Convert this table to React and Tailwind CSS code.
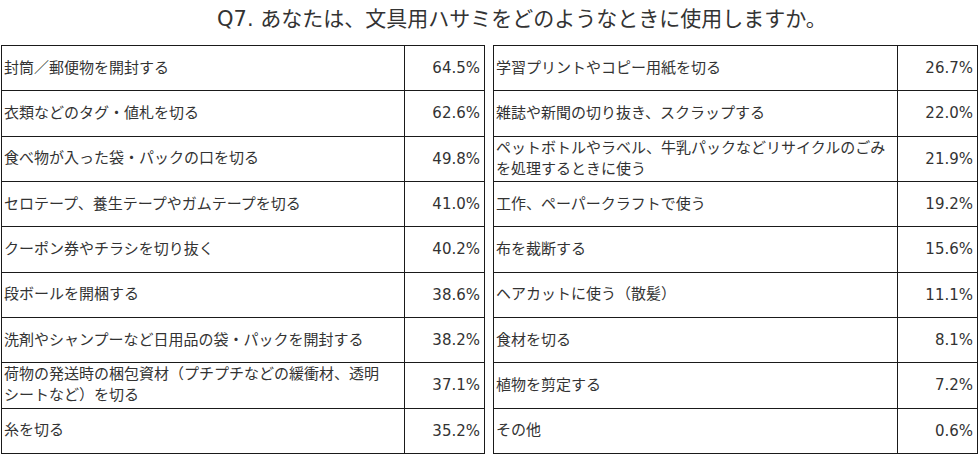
const leftRows = [
  ["封筒／郵便物を開封する", "64.5%"],
  ["衣類などのタグ・値札を切る", "62.6%"],
  ["食べ物が入った袋・パックの口を切る", "49.8%"],
  ["セロテープ、養生テープやガムテープを切る", "41.0%"],
  ["クーポン券やチラシを切り抜く", "40.2%"],
  ["段ボールを開梱する", "38.6%"],
  ["洗剤やシャンプーなど日用品の袋・パックを開封する", "38.2%"],
  ["荷物の発送時の梱包資材（プチプチなどの緩衝材、透明\nシートなど）を切る", "37.1%"],
  ["糸を切る", "35.2%"],
]

const rightRows = [
  ["学習プリントやコピー用紙を切る", "26.7%"],
  ["雑誌や新聞の切り抜き、スクラップする", "22.0%"],
  ["ペットボトルやラベル、牛乳パックなどリサイクルのごみ\nを処理するときに使う", "21.9%"],
  ["工作、ペーパークラフトで使う", "19.2%"],
  ["布を裁断する", "15.6%"],
  ["ヘアカットに使う（散髪）", "11.1%"],
  ["食材を切る", "8.1%"],
  ["植物を剪定する", "7.2%"],
  ["その他", "0.6%"],
]

function Table({ rows, width }) {
  return (
    <div className={`flex flex-col border-t border-l border-r border-[#1a1a1a] ${width}`}>
      {rows.map(([label, value], i) => (
        <div key={i} className="flex h-[45.33px] border-b border-[#1a1a1a]">
          <div className="flex-1 flex items-center pl-[2px] leading-[21px] whitespace-pre-line">
            {label}
          </div>
          <div className="w-[80px] flex items-center justify-end pr-[4px] border-l border-[#1a1a1a]">
            {value}
          </div>
        </div>
      ))}
    </div>
  )
}

export default function App() {
  return (
    <div className="w-[978px] h-[455px] bg-white text-[#333] text-[15px] font-['DejaVu_Sans','Noto_Sans_CJK_JP',sans-serif]">

      {/* Title */}
      <div className="h-[45px] pl-[217px] pt-[5px] text-[21px] leading-[29px] text-[#333]">
        Q7. あなたは、文具用ハサミをどのようなときに使用しますか。
      </div>

      {/* Tables */}
      <div className="flex gap-[8px] pl-[1px]">
        <Table rows={leftRows} width="w-[484px]" />
        <Table rows={rightRows} width="w-[485px]" />
      </div>

    </div>
  )
}
